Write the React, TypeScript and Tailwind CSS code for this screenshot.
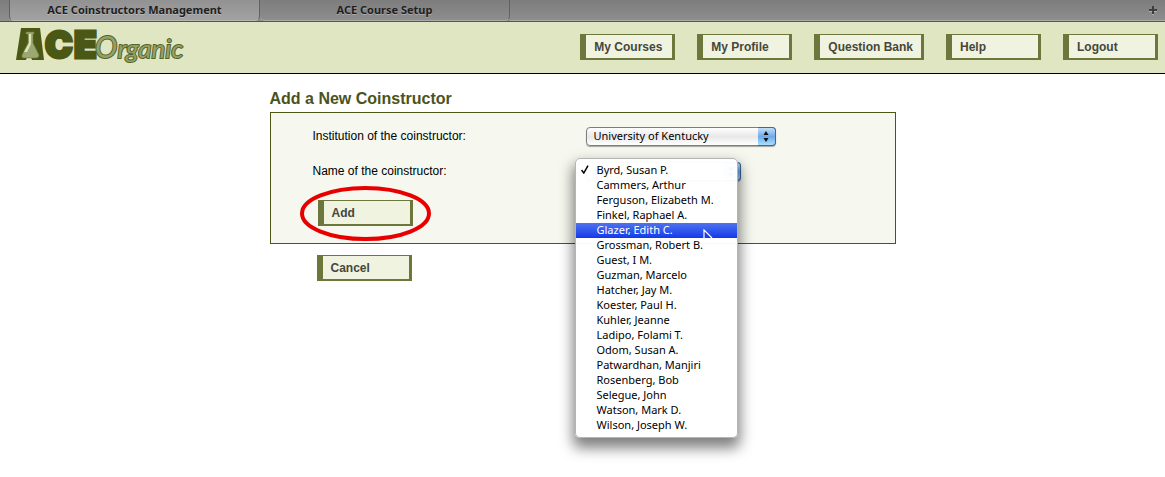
import { useState } from "react";
import type { ReactNode } from "react";

const navItems = ["My Courses", "My Profile", "Question Bank", "Help", "Logout"];

const instructors = [
  "Byrd, Susan P.",
  "Cammers, Arthur",
  "Ferguson, Elizabeth M.",
  "Finkel, Raphael A.",
  "Glazer, Edith C.",
  "Grossman, Robert B.",
  "Guest, I M.",
  "Guzman, Marcelo",
  "Hatcher, Jay M.",
  "Koester, Paul H.",
  "Kuhler, Jeanne",
  "Ladipo, Folami T.",
  "Odom, Susan A.",
  "Patwardhan, Manjiri",
  "Rosenberg, Bob",
  "Selegue, John",
  "Watson, Mark D.",
  "Wilson, Joseph W.",
];

const boxButton =
  "block h-[26px] min-w-[95px] border-t border-r-[3px] border-b-2 border-l-[6px] border-[#6d773c] bg-[#f0f3df] px-2 pt-px text-left text-[12px] leading-[22px] font-bold whitespace-nowrap text-[#45473c]";

function Logo() {
  return (
    <svg width="176" height="51" viewBox="0 -6 176 51" role="img" aria-label="ACE Organic">
      <path d="M6 0H25L29 32H17L16 29H12L11 32H1Z" fill="#4b5714" />
      <path
        d="M11 4H19V6H18V15L24 27Q24 30 21 30H9Q6 30 7 27L13 15V6H11Z"
        fill="#9ba873"
        stroke="#6d793a"
        strokeWidth="0.6"
      />
      <path d="M14 6H16V16L12 24H9L14 15Z" fill="#dde4bb" />
      <g fill="#4b5714" stroke="#4b5714" strokeWidth="3" className="font-['Inter',sans-serif] text-[37px] font-black">
        <text x="30" y="30">C</text>
        <text x="59" y="30">E</text>
      </g>
      <text
        x="80"
        y="30"
        fill="#93a166"
        stroke="#56632a"
        strokeWidth="2"
        paintOrder="stroke"
        className="font-['Lato',sans-serif] text-[26px] font-normal italic"
      >
        <tspan className="text-[30px]">O</tspan>rganic
      </text>
    </svg>
  );
}

function Arrows() {
  return (
    <span className="pointer-events-none absolute inset-y-0 right-0 flex w-[18px] items-center justify-center rounded-r-[4px] border border-l-0 border-[#3c67a5] bg-linear-to-b from-[#c5def7] via-[#6eabea] to-[#a8e0ff]">
      <svg width="6" height="11" viewBox="0 0 6 11" aria-hidden="true">
        <path d="M3 0L5.5 4H.5ZM3 11L.5 7H5.5Z" fill="#111" />
      </svg>
    </span>
  );
}

function SelectField({ id, label, children, popup, width }: {
  id: string;
  label: string;
  children: ReactNode;
  popup?: ReactNode;
  width: string;
}) {
  return (
    <div className="grid grid-cols-[273px_1fr]">
      <label htmlFor={id} className="text-[12px] leading-[18px] text-black">{label}</label>
      <div className={`relative h-[19px] ${width}`}>
        <select
          id={id}
          className="block h-full w-full appearance-none rounded-[4px] border border-[#7d7d7d] bg-linear-to-b from-white via-[#e8e8e8] to-white pr-5 pb-[2px] pl-[7px] font-['Noto_Sans',sans-serif] text-[11px] leading-[15px] text-black shadow-[0_1px_1px_#00000055]"
        >
          {children}
        </select>
        <Arrows />
        {popup}
      </div>
    </div>
  );
}

function NameMenu() {
  const [active, setActive] = useState(4);
  return (
    <ul
      role="listbox"
      aria-label="Name of the coinstructor"
      className="absolute top-[-4px] left-[-11px] z-10 w-[163px] rounded-[5px] border border-[#b4b4b4] bg-white/97 py-1 font-['Noto_Sans',sans-serif] text-[11px] leading-[13px] text-black shadow-[0_8px_14px_2px_#00000080]"
    >
      {instructors.map((name, i) => (
        <li
          key={name}
          role="option"
          aria-selected={i === 0}
          onMouseEnter={() => setActive(i)}
          className={
            i === active
              ? "flex h-[15px] items-start bg-linear-to-b from-[#4f71ee] to-[#1437eb] whitespace-nowrap text-white"
              : "flex h-[15px] items-start whitespace-nowrap"
          }
        >
          <span className="flex w-[21px] pt-[2px] pl-[5px]">
            {i === 0 && (
              <svg width="8" height="9" viewBox="0 0 8 9" aria-hidden="true">
                <path d="M.5 5L2.8 8L7 .7" fill="none" stroke="#000" strokeWidth="1.5" />
              </svg>
            )}
          </span>
          {name}
        </li>
      ))}
      <svg className="pointer-events-none absolute top-[70px] left-[127px]" width="11" height="9" viewBox="0 0 11 9" aria-hidden="true">
        <path d="M1 9V1L9 9" fill="#1a3ce8" stroke="#fff" strokeWidth="1.2" />
      </svg>
    </ul>
  );
}

export default function App() {
  return (
    <div className="min-h-screen bg-white font-['Liberation_Sans',Arial,sans-serif]">
      <div className="flex h-[22px] items-stretch border-b border-[#555] bg-linear-to-b from-[#7d7d7d] to-[#8e8e8e] pl-[9px] font-['Noto_Sans',sans-serif] text-[11px] font-bold text-[#1e1e1e]">
        <button className="w-[251px] rounded-b-[5px] border-x border-b border-x-[#616161] border-b-[#b5b5b5] bg-linear-to-b from-[#929292] to-[#a2a2a2] leading-[18px] [text-shadow:0_1px_0_#b8b8b8]">
          ACE Coinstructors Management
        </button>
        <button className="w-[250px] rounded-b-[5px] border-r border-b border-r-[#616161] border-b-[#aaa] leading-[18px] [text-shadow:0_1px_0_#aaaaaa]">
          ACE Course Setup
        </button>
        <div className="flex flex-1 items-center justify-end border-b border-[#aaa] pr-2">
          <button aria-label="New tab" className="block">
            <svg width="8" height="9" viewBox="0 0 8 9" aria-hidden="true">
              <path d="M0 5H8M4 1V9" stroke="#b0b0b0" strokeWidth="2" />
              <path d="M0 4H8M4 0V8" stroke="#3e3e3e" strokeWidth="2" />
            </svg>
          </button>
        </div>
      </div>

      <header className="flex flex-wrap items-start justify-between border-b border-black bg-[#e0e6c1] pr-[7px] pl-[15px]">
        <a href="#home" className="block" aria-label="ACE Organic">
          <Logo />
        </a>
        <nav className="flex flex-wrap gap-[22px] pt-3 pb-[13px]">
          {navItems.map((item) => (
            <button key={item} className={boxButton}>{item}</button>
          ))}
        </nav>
      </header>

      <main className="mx-auto max-w-[626px] pt-4">
        <h1 className="mb-1 text-[16px] leading-[18px] font-bold text-[#4b5320]">Add a New Coinstructor</h1>
        <form
          onSubmit={(e) => e.preventDefault()}
          className="flex flex-col gap-4 border border-[#4b5714] bg-[#f6f7ee] pt-[14px] pb-[17px] pl-[42px]"
        >
          <SelectField id="institution" label="Institution of the coinstructor:" width="w-[190px]">
            <option>University of Kentucky</option>
          </SelectField>
          <SelectField id="name" label="Name of the coinstructor:" width="w-[155px]" popup={<NameMenu />}>
            {instructors.map((name) => (
              <option key={name}>{name}</option>
            ))}
          </SelectField>
          <div className="flex pt-[3px] pl-[5px]">
            <div className="relative">
              <button type="submit" className={boxButton}>Add</button>
              <svg
                className="pointer-events-none absolute top-[-14px] left-[-18px]"
                width="131"
                height="55"
                viewBox="0 0 131 55"
                aria-hidden="true"
              >
                <ellipse cx="65.5" cy="27.5" rx="63.5" ry="25.5" fill="none" stroke="#e80000" strokeWidth="4" />
              </svg>
            </div>
          </div>
        </form>
        <div className="pt-[11px] pl-[47px]">
          <button className={boxButton}>Cancel</button>
        </div>
      </main>
    </div>
  );
}
